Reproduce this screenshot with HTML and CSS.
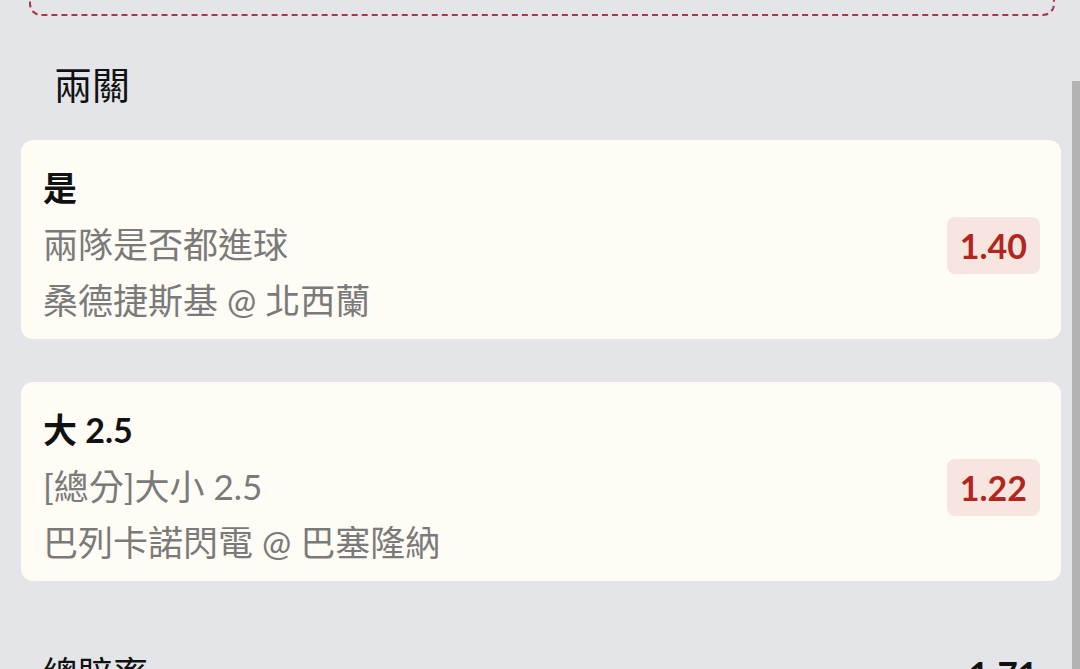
FILE: index.html
```html
<!DOCTYPE html>
<html lang="zh-Hant">
<head>
<meta charset="utf-8">
<link rel="stylesheet" href="styles.css">
</head>
<body>
<div class="page">
  <div class="dashed-box"></div>
  <h2 class="section-title">兩關</h2>
  <div class="card">
    <div class="card-text">
      <div class="sel">是</div>
      <div class="sub">兩隊是否都進球</div>
      <div class="sub">桑德捷斯基 @ 北西蘭</div>
    </div>
    <div class="odds">1.40</div>
  </div>
  <div class="card">
    <div class="card-text">
      <div class="sel">大 2.5</div>
      <div class="sub">[總分]大小 2.5</div>
      <div class="sub">巴列卡諾閃電 @ 巴塞隆納</div>
    </div>
    <div class="odds">1.22</div>
  </div>
  <div class="total-row">
    <span class="total-label">總賠率</span>
    <span class="total-value">1.71</span>
  </div>
</div>
<div class="scrollbar"></div>
</body>
</html>
```
FILE: styles.css
```css
html, body {
  margin: 0;
  padding: 0;
  height: 100%;
  overflow: hidden;
}
body {
  background: #e4e5e8;
  font-family: Lato, "Noto Sans CJK TC", "Noto Sans", sans-serif;
  color: #111;
}
.page {
  padding: 0 19px 0 21px;
}
.dashed-box {
  height: 60px;
  margin: -48px 6px 0 8px;
  border: 2px dashed #a83a48;
  border-radius: 12px;
}
.section-title {
  margin: 43px 0 0 33px;
  font-weight: 400;
  font-size: 38px;
  line-height: 50px;
  color: #111;
}
.card {
  margin-top: 31px;
  background: #fefcf4;
  border-radius: 12px;
  padding: 20px 21px 11px 22px;
  display: flex;
  align-items: center;
  justify-content: space-between;
}
.card + .card {
  margin-top: 43px;
}
.card-text {
  display: flex;
  flex-direction: column;
}
.sel {
  font-size: 34px;
  font-weight: 700;
  line-height: 56px;
  color: #111;
}
.sub {
  font-size: 35px;
  font-weight: 400;
  line-height: 56px;
  color: #7a7a7a;
}
.odds {
  margin-top: 2px;
  background: #f6e6df;
  color: #b2261f;
  font-weight: 700;
  font-size: 34px;
  line-height: 57px;
  padding: 0 13px;
  border-radius: 8px;
}
.total-row {
  margin-top: 67px;
  padding: 0 23px 0 22px;
  display: flex;
  justify-content: space-between;
  font-size: 35px;
  line-height: 50px;
}
.total-value {
  font-weight: 700;
}
.scrollbar {
  position: absolute;
  right: 0;
  top: 81px;
  width: 8px;
  bottom: 0;
  background: #b3b3b3;
}
```
